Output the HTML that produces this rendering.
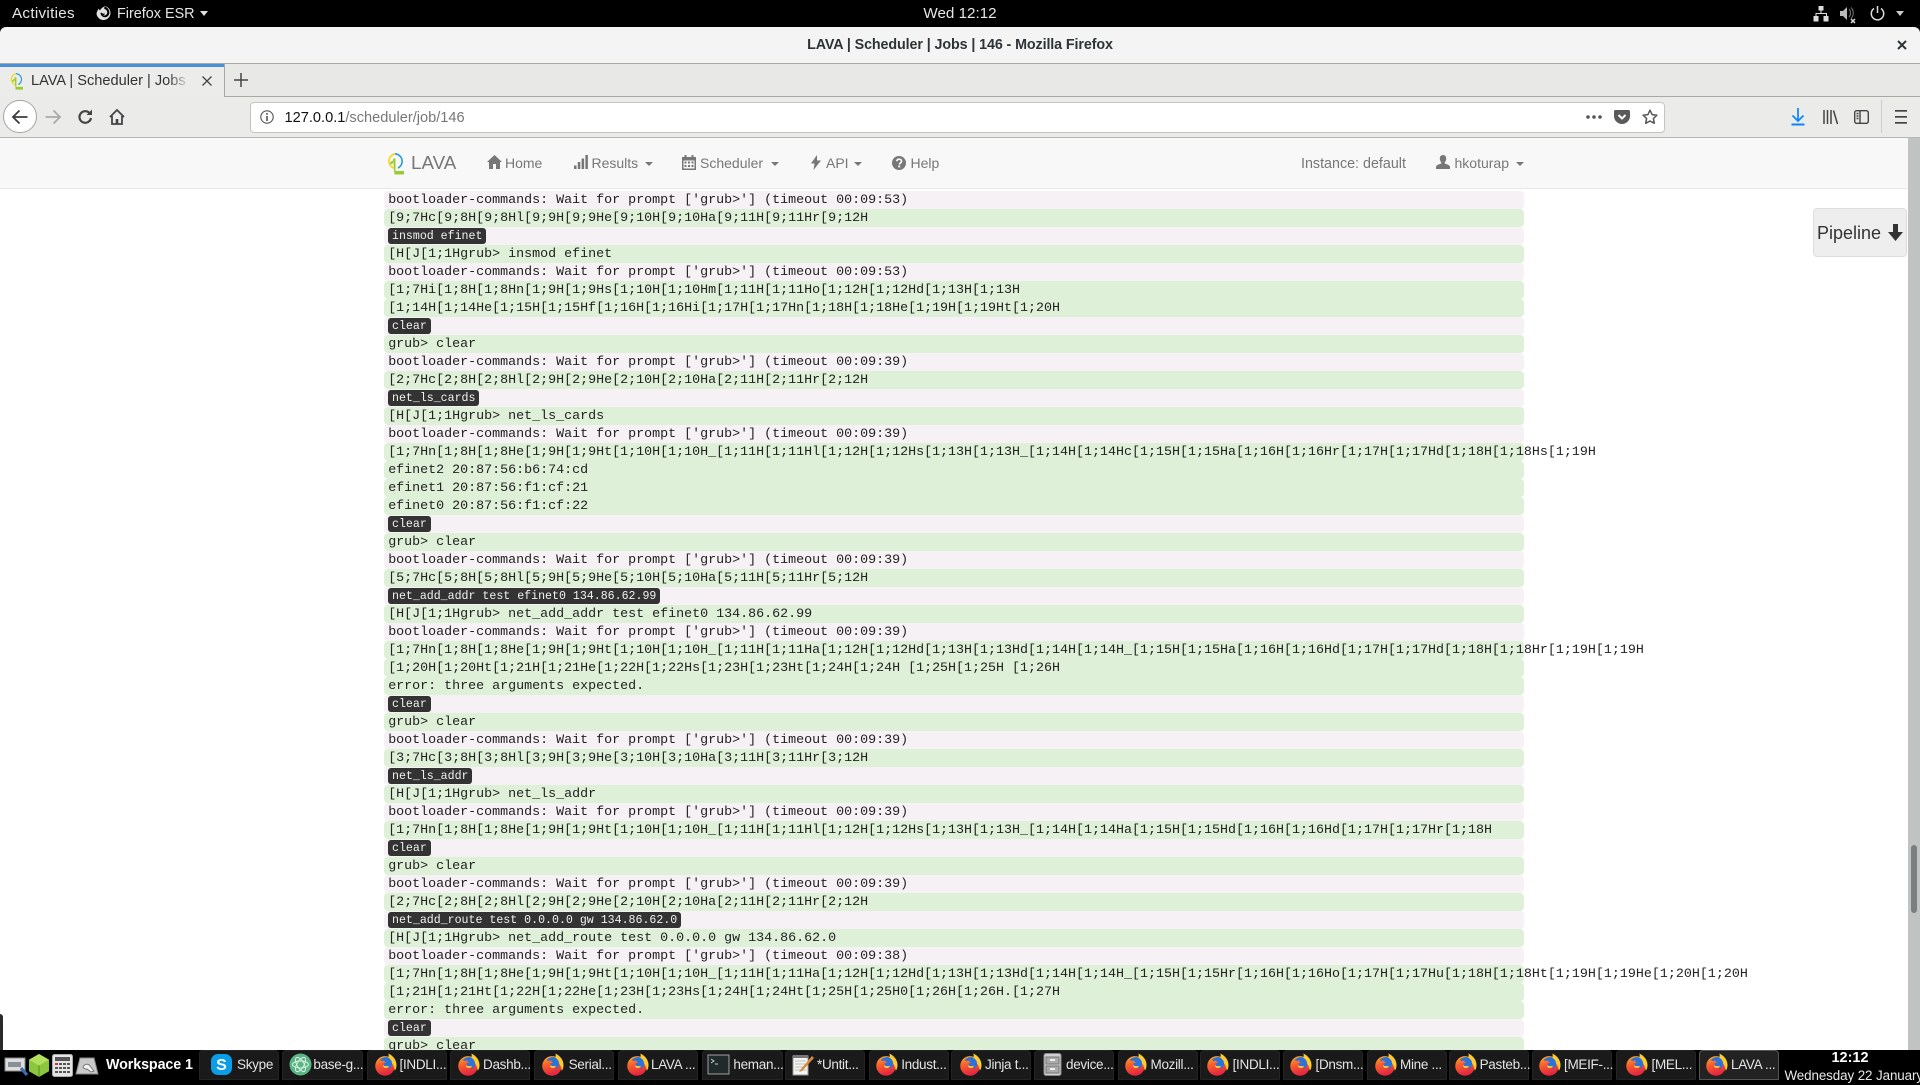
<!DOCTYPE html>
<html><head><meta charset="utf-8"><title>LAVA | Scheduler | Jobs | 146 - Mozilla Firefox</title>
<style>
html,body{margin:0;padding:0;background:#000;}
body{width:1920px;height:1080px;position:relative;overflow:hidden;font-family:"Liberation Sans",sans-serif;}
.a{position:absolute;white-space:pre;}
svg{position:absolute;overflow:visible;}
#log{position:absolute;left:0;top:138px;width:1920px;height:912px;overflow:hidden;background:#fff;}
.r{position:absolute;left:384px;width:1135.8px;height:18px;padding-left:4.2px;font:13.33px/20px "Liberation Mono",monospace;color:#222;white-space:pre;border-radius:4px;}
.g{background:#dff0d8;}
.p{background:#f6f1f4;}
.l{position:absolute;left:4.2px;top:1.4px;height:15.6px;line-height:17.4px;padding:0 3.8px;background:#333;color:#f2f2f2;font-size:11.6px;border-radius:3px;}
.nv{color:#777;font-size:14px;line-height:20px;}
.t{position:absolute;top:1050px;width:80.4px;height:30px;background:#1a1a1a;border-radius:4px 4px 0 0;box-shadow:inset 0 0 0 1px #242424;}
.t span{position:absolute;top:5px;color:#e4e4e4;font-size:13.5px;letter-spacing:-.3px;line-height:20px;white-space:pre;}
.t svg{top:3px;left:7px;width:23px;height:23px;}
.car{position:absolute;width:0;height:0;border-left:4px solid transparent;border-right:4px solid transparent;border-top:4px solid #777;}
</style></head><body>
<svg width="0" height="0" style="position:absolute">
<defs>
<linearGradient id="ffo" x1="0" y1="0" x2="0.3" y2="1"><stop offset="0" stop-color="#ffb52e"/><stop offset=".45" stop-color="#f9612b"/><stop offset="1" stop-color="#e5263f"/></linearGradient>
<symbol id="ff" viewBox="0 0 24 24">
<circle cx="11.5" cy="13.5" r="10.2" fill="url(#ffo)"/>
<path d="M15 .5c4.500 2 8.500 6.500 8.500 12 0 2.500-.7 4.500-1.800 6-.7-5.500-3-9-7.500-11.500 1-2 1.500-4.500.8-6.500z" fill="#ffcb2e"/>
<path d="M6 7.500c2-2.500 5.500-3.800 8-3 3.500 1.300 5.300 4.500 4.800 7.800-.4 2.700-2.200 4.500-4.800 5 1.700-1 2.200-2.300 1.300-3.600-1.500.7-3.300.5-4.600-.4-.9-.8-1.100-1.800-.5-2.600.9.200 1.800-.1 2.300-.9-1.300-.5-1.800-1.200-1.800-2.100-1.800.7-3.300.7-4.700-.2z" fill="#2a73d9"/>
<path d="M9.500 12.500c1.500 1.500 4 1.800 6 .8-.3 1.500-1.800 2.500-3.500 2.400-1.500-.1-2.500-1.500-2.500-3.200z" fill="#ffd84a"/>
</symbol>
<symbol id="logo" viewBox="0 0 18 22">
<path d="M9 15.500A7.500 7.500 0 0 1 9 .8" fill="none" stroke="#f7d51d" stroke-width="1.600"/>
<path d="M9 .8A7.500 7.500 0 0 1 12 15" fill="none" stroke="#2a9fd6" stroke-width="1.600"/>
<path d="M7 6h2.500v12.500H18V22H8.500z" fill="#9bcc2f" transform="translate(0 -.5)"/>
<path d="M7 7.500c-2 .5-3 2-3 3.500 1.500.5 3 0 3-1.500z" fill="#9bcc2f"/>
</symbol>
</defs></svg>

<!-- GNOME top bar -->
<div class="a" style="left:12px;top:5px;color:#e6e6e6;font-size:15.200px;letter-spacing:.3px;line-height:18px;">Activities</div>
<svg style="left:96px;top:5px" width="15" height="16" viewBox="0 0 15 16"><path d="M7.500 1a7 7 0 1 1-7 7.500C1 6 2 4.500 3 3.500c0 1 .5 1.500 1 2C5 3.500 6.500 2 9 1.500 8 2.500 8 3.500 8.500 4c2 .5 3 2 2.700 4-.4 2-2.700 3-4.500 2.300C8 10.200 9 9.500 8.800 8.500 7.500 9 6 8.500 5.500 7.500L4.500 8c.2 3 3 5 6 4 2.500-1 3.500-4 2.500-6.500C12 3 10 1.500 7.500 1z" fill="#e0e0e0"/></svg>
<div class="a" style="left:117px;top:5px;color:#e6e6e6;font-size:14.400px;line-height:18px;">Firefox ESR</div>
<div class="car" style="left:200px;top:11px;border-left-width:4.500px;border-right-width:4.500px;border-top:5px solid #e0e0e0"></div>
<div class="a" style="left:860px;width:200px;text-align:center;top:5px;color:#e6e6e6;font-size:15.200px;line-height:18px;">Wed 12:12</div>
<svg style="left:1813px;top:6px" width="16" height="16" viewBox="0 0 16 16" fill="#ddd"><rect x="5.500" y="0" width="5" height="4.500"/><rect x="0.500" y="10" width="5" height="5.500"/><rect x="10.500" y="10" width="5" height="5.500"/><path d="M7.500 4.500h1V7h5.500v3h-1V8H3.500v2h-1V7H7.500z"/></svg>
<svg style="left:1840px;top:6px" width="18" height="18" viewBox="0 0 18 18"><path d="M0 5h3l4-4v13L3 10H0z" fill="#bbb"/><path d="M9 3c2 2 2 6 0 8M11 1.500c3 3 3 8 0 11" stroke="#777" fill="none"/><path d="M11 13l4 4m0-4l-4 4" stroke="#ddd" stroke-width="1.500"/></svg>
<svg style="left:1870px;top:6px" width="15" height="16" viewBox="0 0 15 16" fill="none" stroke="#ddd" stroke-width="1.500"><path d="M7.500 0v7"/><path d="M4 2.500a6.200 6.200 0 1 0 7 0"/></svg>
<div class="car" style="left:1896px;top:11px;border-left-width:4.500px;border-right-width:4.500px;border-top:5px solid #ccc"></div>

<!-- Title bar -->
<div class="a" style="left:0;top:27px;width:1920px;height:36px;background:#f4f4f4;border-radius:6px 6px 0 0;border-bottom:1px solid #a9a9a4;"></div>
<div class="a" style="left:660px;width:600px;text-align:center;top:36px;color:#2e3436;font-size:14.300px;line-height:19px;font-weight:bold;letter-spacing:-.1px;">LAVA | Scheduler | Jobs | 146 - Mozilla Firefox</div>
<svg style="left:1897px;top:40px" width="10" height="10" viewBox="0 0 10 10"><path d="M1 1l8 8M9 1l-8 8" stroke="#2e3436" stroke-width="2"/></svg>

<!-- Tab bar -->
<div class="a" style="left:0;top:64px;width:1920px;height:32px;background:#e8e8e6;border-bottom:1px solid #a9a9a4;"></div>
<div class="a" style="left:0;top:64px;width:224px;height:33px;background:#ececeb;border-right:1px solid #a9a9a4;box-sizing:content-box;"></div>
<div class="a" style="left:0;top:64px;width:224px;height:3px;background:#4a90d9;"></div>
<svg style="left:9px;top:73px" width="14" height="17"><use href="#logo" width="14" height="17"/></svg>
<div class="a" style="left:31px;top:72px;width:157px;overflow:hidden;color:#333;font-size:14.600px;line-height:19px;">LAVA | Scheduler | Jobs | 146</div>
<div class="a" style="left:168px;top:71px;width:22px;height:21px;background:linear-gradient(90deg,rgba(236,236,235,0),#ececeb);"></div>
<svg style="left:202px;top:76px" width="10" height="10" viewBox="0 0 10 10"><path d="M.5.5l9 9M9.500.5l-9 9" stroke="#444" stroke-width="1.300"/></svg>
<svg style="left:234px;top:73px" width="14" height="14" viewBox="0 0 14 14"><path d="M7 0v14M0 7h14" stroke="#444" stroke-width="1.500"/></svg>

<!-- Toolbar -->
<div class="a" style="left:0;top:97px;width:1920px;height:40px;background:#ebebea;border-bottom:1px solid #b5b5b1;"></div>
<div class="a" style="left:3.300px;top:100px;width:31.400px;height:31.400px;border:1px solid #a5a5a5;border-radius:50%;background:#fff;"></div>
<svg style="left:12px;top:109px" width="16" height="16" viewBox="0 0 16 16" fill="none" stroke="#3c3c3c" stroke-width="1.800"><path d="M15.500 8H1M7.500 1.500L1 8l6.500 6.500"/></svg>
<svg style="left:45px;top:109px" width="16" height="16" viewBox="0 0 16 16" fill="none" stroke="#aaa" stroke-width="1.800"><path d="M.5 8H15M8.500 1.500L15 8l-6.500 6.500"/></svg>
<svg style="left:78px;top:109px" width="15" height="15" viewBox="0 0 15 15" fill="none" stroke="#444" stroke-width="2.200"><path d="M13 9a5.800 5.800 0 1 1-1.500-5"/><path d="M14 .5v5.500H8.500" fill="#444" stroke="none"/></svg>
<svg style="left:109px;top:109px" width="16" height="16" viewBox="0 0 16 16" fill="none" stroke="#444" stroke-width="1.800"><path d="M1 8l7-7 7 7M3 7v8h10V7"/><rect x="6.700" y="10" width="2.600" height="5" fill="#444" stroke="none"/></svg>

<div class="a" style="left:250px;top:102px;width:1413px;height:29px;background:#fff;border:1px solid #c4c4c2;border-radius:4px;"></div>
<svg style="left:260px;top:110px" width="14" height="14" viewBox="0 0 14 14"><circle cx="7" cy="7" r="6.200" fill="none" stroke="#555" stroke-width="1.100"/><rect x="6.200" y="6" width="1.600" height="5" fill="#555"/><rect x="6.200" y="3" width="1.600" height="1.700" fill="#555"/></svg>
<div class="a" style="left:284.500px;top:108px;font-size:14.600px;line-height:20px;color:#111;">127.0.0.1<span style="color:#777">/scheduler/job/146</span></div>
<svg style="left:1586px;top:114px" width="16" height="6" viewBox="0 0 16 6" fill="#555"><circle cx="2" cy="3" r="1.800"/><circle cx="8" cy="3" r="1.800"/><circle cx="14" cy="3" r="1.800"/></svg>
<svg style="left:1614px;top:110px" width="16" height="14" viewBox="0 0 16 14"><path d="M1.500 0h13A1.500 1.500 0 0 1 16 1.500V6a8 8 0 0 1-16 0V1.500A1.500 1.500 0 0 1 1.500 0z" fill="#5a5a5a"/><path d="M4.500 5L8 8.500 11.500 5" stroke="#fff" stroke-width="2" fill="none"/></svg>
<svg style="left:1642px;top:109px" width="16" height="16" viewBox="0 0 16 16"><path d="M8 1.200l2.100 4.400 4.800.6-3.500 3.300.9 4.800L8 12l-4.300 2.300.9-4.800L1.100 6.200l4.800-.6z" fill="none" stroke="#555" stroke-width="1.500" stroke-linejoin="round"/></svg>
<svg style="left:1791px;top:108px" width="14" height="18" viewBox="0 0 14 18" fill="none" stroke="#0a84ff" stroke-width="1.700"><path d="M7 0v12.500M1.500 7.500L7 13l5.500-5.500"/><path d="M.5 16.500h13" stroke-width="2"/></svg>
<svg style="left:1823px;top:110px" width="15" height="14" viewBox="0 0 15 14" fill="none" stroke="#444" stroke-width="1.500"><path d="M1 0v14M4.500 0v14M8 0v14M10.500 .5L14.500 14"/></svg>
<svg style="left:1854px;top:110px" width="15" height="14" viewBox="0 0 15 14" fill="none" stroke="#444" stroke-width="1.400"><rect x=".7" y=".7" width="13.600" height="12.600" rx="2"/><path d="M6 .7v12.600M2.500 3.500h2M2.500 6h2M2.500 8.500h2"/></svg>
<div class="a" style="left:1881px;top:100px;width:1px;height:33px;background:#ccc;"></div>
<svg style="left:1895px;top:110px" width="12" height="14" viewBox="0 0 12 14" fill="#444"><rect width="12" height="1.700" y="0"/><rect width="12" height="1.700" y="6"/><rect width="12" height="1.700" y="12"/></svg>

<!-- Page log -->
<div id="log">
<div class="r g" style="top:-17px"></div>
<div class="r p" style="top:53px">bootloader-commands: Wait for prompt ['grub&gt;'] (timeout 00:09:53)</div>
<div class="r g" style="top:71px">[9;7Hc[9;8H[9;8Hl[9;9H[9;9He[9;10H[9;10Ha[9;11H[9;11Hr[9;12H</div>
<div class="r p" style="top:89px"><span class="l">insmod efinet</span></div>
<div class="r g" style="top:107px">[H[J[1;1Hgrub&gt; insmod efinet</div>
<div class="r p" style="top:125px">bootloader-commands: Wait for prompt ['grub&gt;'] (timeout 00:09:53)</div>
<div class="r g" style="top:143px">[1;7Hi[1;8H[1;8Hn[1;9H[1;9Hs[1;10H[1;10Hm[1;11H[1;11Ho[1;12H[1;12Hd[1;13H[1;13H</div>
<div class="r g" style="top:161px">[1;14H[1;14He[1;15H[1;15Hf[1;16H[1;16Hi[1;17H[1;17Hn[1;18H[1;18He[1;19H[1;19Ht[1;20H</div>
<div class="r p" style="top:179px"><span class="l">clear</span></div>
<div class="r g" style="top:197px">grub&gt; clear</div>
<div class="r p" style="top:215px">bootloader-commands: Wait for prompt ['grub&gt;'] (timeout 00:09:39)</div>
<div class="r g" style="top:233px">[2;7Hc[2;8H[2;8Hl[2;9H[2;9He[2;10H[2;10Ha[2;11H[2;11Hr[2;12H</div>
<div class="r p" style="top:251px"><span class="l">net_ls_cards</span></div>
<div class="r g" style="top:269px">[H[J[1;1Hgrub&gt; net_ls_cards</div>
<div class="r p" style="top:287px">bootloader-commands: Wait for prompt ['grub&gt;'] (timeout 00:09:39)</div>
<div class="r g" style="top:305px">[1;7Hn[1;8H[1;8He[1;9H[1;9Ht[1;10H[1;10H_[1;11H[1;11Hl[1;12H[1;12Hs[1;13H[1;13H_[1;14H[1;14Hc[1;15H[1;15Ha[1;16H[1;16Hr[1;17H[1;17Hd[1;18H[1;18Hs[1;19H</div>
<div class="r g" style="top:323px">efinet2 20:87:56:b6:74:cd</div>
<div class="r g" style="top:341px">efinet1 20:87:56:f1:cf:21</div>
<div class="r g" style="top:359px">efinet0 20:87:56:f1:cf:22</div>
<div class="r p" style="top:377px"><span class="l">clear</span></div>
<div class="r g" style="top:395px">grub&gt; clear</div>
<div class="r p" style="top:413px">bootloader-commands: Wait for prompt ['grub&gt;'] (timeout 00:09:39)</div>
<div class="r g" style="top:431px">[5;7Hc[5;8H[5;8Hl[5;9H[5;9He[5;10H[5;10Ha[5;11H[5;11Hr[5;12H</div>
<div class="r p" style="top:449px"><span class="l">net_add_addr test efinet0 134.86.62.99</span></div>
<div class="r g" style="top:467px">[H[J[1;1Hgrub&gt; net_add_addr test efinet0 134.86.62.99</div>
<div class="r p" style="top:485px">bootloader-commands: Wait for prompt ['grub&gt;'] (timeout 00:09:39)</div>
<div class="r g" style="top:503px">[1;7Hn[1;8H[1;8He[1;9H[1;9Ht[1;10H[1;10H_[1;11H[1;11Ha[1;12H[1;12Hd[1;13H[1;13Hd[1;14H[1;14H_[1;15H[1;15Ha[1;16H[1;16Hd[1;17H[1;17Hd[1;18H[1;18Hr[1;19H[1;19H</div>
<div class="r g" style="top:521px">[1;20H[1;20Ht[1;21H[1;21He[1;22H[1;22Hs[1;23H[1;23Ht[1;24H[1;24H [1;25H[1;25H [1;26H</div>
<div class="r g" style="top:539px">error: three arguments expected.</div>
<div class="r p" style="top:557px"><span class="l">clear</span></div>
<div class="r g" style="top:575px">grub&gt; clear</div>
<div class="r p" style="top:593px">bootloader-commands: Wait for prompt ['grub&gt;'] (timeout 00:09:39)</div>
<div class="r g" style="top:611px">[3;7Hc[3;8H[3;8Hl[3;9H[3;9He[3;10H[3;10Ha[3;11H[3;11Hr[3;12H</div>
<div class="r p" style="top:629px"><span class="l">net_ls_addr</span></div>
<div class="r g" style="top:647px">[H[J[1;1Hgrub&gt; net_ls_addr</div>
<div class="r p" style="top:665px">bootloader-commands: Wait for prompt ['grub&gt;'] (timeout 00:09:39)</div>
<div class="r g" style="top:683px">[1;7Hn[1;8H[1;8He[1;9H[1;9Ht[1;10H[1;10H_[1;11H[1;11Hl[1;12H[1;12Hs[1;13H[1;13H_[1;14H[1;14Ha[1;15H[1;15Hd[1;16H[1;16Hd[1;17H[1;17Hr[1;18H</div>
<div class="r p" style="top:701px"><span class="l">clear</span></div>
<div class="r g" style="top:719px">grub&gt; clear</div>
<div class="r p" style="top:737px">bootloader-commands: Wait for prompt ['grub&gt;'] (timeout 00:09:39)</div>
<div class="r g" style="top:755px">[2;7Hc[2;8H[2;8Hl[2;9H[2;9He[2;10H[2;10Ha[2;11H[2;11Hr[2;12H</div>
<div class="r p" style="top:773px"><span class="l">net_add_route test 0.0.0.0 gw 134.86.62.0</span></div>
<div class="r g" style="top:791px">[H[J[1;1Hgrub&gt; net_add_route test 0.0.0.0 gw 134.86.62.0</div>
<div class="r p" style="top:809px">bootloader-commands: Wait for prompt ['grub&gt;'] (timeout 00:09:38)</div>
<div class="r g" style="top:827px">[1;7Hn[1;8H[1;8He[1;9H[1;9Ht[1;10H[1;10H_[1;11H[1;11Ha[1;12H[1;12Hd[1;13H[1;13Hd[1;14H[1;14H_[1;15H[1;15Hr[1;16H[1;16Ho[1;17H[1;17Hu[1;18H[1;18Ht[1;19H[1;19He[1;20H[1;20H</div>
<div class="r g" style="top:845px">[1;21H[1;21Ht[1;22H[1;22He[1;23H[1;23Hs[1;24H[1;24Ht[1;25H[1;25H0[1;26H[1;26H.[1;27H</div>
<div class="r g" style="top:863px">error: three arguments expected.</div>
<div class="r p" style="top:881px"><span class="l">clear</span></div>
<div class="r g" style="top:899px">grub&gt; clear</div>
<div class="a" style="left:0;top:876px;width:3px;height:36px;background:#2a2a2a;border-radius:0 4px 0 0;"></div>
</div>

<!-- Navbar -->
<div class="a" style="left:0;top:138px;width:1908px;height:50px;background:#f8f8f8;border-bottom:1px solid #e7e7e7;"></div>
<svg style="left:386px;top:153px" width="18" height="22"><use href="#logo" width="18" height="22"/></svg>
<div class="a" style="left:411px;top:152px;color:#777;font-size:18.800px;line-height:22px;">LAVA</div>
<svg style="left:487px;top:155px" width="15" height="14" viewBox="0 0 15 14" fill="#777"><path d="M7.500 0L15 7h-2v7H9V9H6v5H2V7H0z"/></svg>
<div class="a nv" style="left:505px;top:153px;">Home</div>
<svg style="left:574px;top:155px" width="14" height="14" viewBox="0 0 14 14" fill="#777"><rect x="0" y="10.500" width="2.500" height="3.500"/><rect x="3.800" y="7" width="2.500" height="7"/><rect x="7.600" y="3.500" width="2.500" height="10.500"/><rect x="11.400" y="0" width="2.500" height="14"/></svg>
<div class="a nv" style="left:591.500px;top:153px;">Results</div>
<div class="car" style="left:645px;top:162px"></div>
<svg style="left:682px;top:155px" width="14" height="15" viewBox="0 0 14 15" fill="#777"><path d="M0 2h2.500V0h2v2h5V0h2v2H14v13H0zM1.500 5.500v8h11v-8z"/><path d="M2.500 6.500h2v2h-2zm3.500 0h2v2H6zm3.500 0h2v2h-2zm-7 3.500h2v2h-2zm3.500 0h2v2H6zm3.500 0h2v2h-2z"/></svg>
<div class="a nv" style="left:700px;top:153px;">Scheduler</div>
<div class="car" style="left:770.500px;top:162px"></div>
<svg style="left:811px;top:155px" width="10" height="15" viewBox="0 0 10 15" fill="#777"><path d="M6 0L0 8.500h3.500L2.500 15 10 5.500H6z"/></svg>
<div class="a nv" style="left:826px;top:153px;">API</div>
<div class="car" style="left:853.500px;top:162px"></div>
<svg style="left:892px;top:156px" width="14" height="14" viewBox="0 0 14 14"><circle cx="7" cy="7" r="7" fill="#777"/><path d="M4.700 5.200C5 3.800 6 3.200 7.200 3.200c1.400 0 2.300.9 2.300 2 0 1.800-2 1.700-2 3.300" fill="none" stroke="#f8f8f8" stroke-width="1.700"/><rect x="6.200" y="9.500" width="2" height="1.900" fill="#f8f8f8"/></svg>
<div class="a nv" style="left:910.500px;top:153px;">Help</div>
<div class="a nv" style="left:1301px;top:154px;font-size:14.300px;">Instance: default</div>
<svg style="left:1436px;top:155px" width="14" height="14" viewBox="0 0 14 14" fill="#777"><path d="M7 0c2 0 3.200 1.600 3.200 3.500 0 1.500-.6 3-1.500 3.800v1.200c1.800.6 5.300 1.500 5.300 3.500v2H0v-2c0-2 3.500-2.900 5.300-3.500V7.300c-.9-.8-1.500-2.300-1.500-3.800C3.800 1.600 5 0 7 0z"/></svg>
<div class="a nv" style="left:1454.500px;top:153px;">hkoturap</div>
<div class="car" style="left:1516px;top:162px"></div>

<!-- Pipeline button -->
<div class="a" style="left:1813px;top:208px;width:94px;height:49px;box-sizing:border-box;background:#eee;border:1px solid #ddd;border-radius:4px;"></div>
<div class="a" style="left:1817px;top:222px;font-size:18px;line-height:22px;color:#333;">Pipeline</div>
<svg style="left:1888px;top:224px" width="15" height="17" viewBox="0 0 15 17" fill="#333"><path d="M5 0h5v8h5l-7.500 9L0 8h5z"/></svg>

<!-- Scrollbar -->
<div class="a" style="left:1908px;top:138px;width:12px;height:912px;background:#c1c3c3;"></div>
<div class="a" style="left:1911px;top:845px;width:6px;height:68px;background:#7a7f7f;border-radius:3px;"></div>

<!-- Taskbar -->
<div class="a" style="left:0;top:1050px;width:1920px;height:30px;background:#000;"></div>
<svg style="left:4px;top:1055px" width="24" height="22" viewBox="0 0 24 22"><rect x="1" y="3" width="20" height="13" fill="#ddd" stroke="#888"/><rect x="4" y="7" width="13" height="5" fill="#8a8f95"/><path d="M17 13l6 7" stroke="#3a6fb0" stroke-width="3"/></svg>
<svg style="left:29px;top:1054px" width="20" height="23" viewBox="0 0 20 23"><path d="M10 0l10 5.700v11.600L10 23 0 17.300V5.700z" fill="#8cc63f"/><path d="M10 0l10 5.700L10 11.500 0 5.700z" fill="#b2e05c"/><path d="M10 11.500V23" stroke="#5a8a1f"/></svg>
<svg style="left:52px;top:1054px" width="21" height="23" viewBox="0 0 21 23"><rect x=".5" y=".5" width="20" height="22" rx="2" fill="#e4e4e4" stroke="#aaa"/><rect x="3" y="3" width="15" height="4" fill="#555"/><g fill="#555"><rect x="3" y="9" width="3" height="2" fill="#c33"/><rect x="7" y="9" width="3" height="2"/><rect x="11" y="9" width="3" height="2"/><rect x="15" y="9" width="3" height="2"/><rect x="3" y="13" width="3" height="2"/><rect x="7" y="13" width="3" height="2"/><rect x="11" y="13" width="3" height="2"/><rect x="15" y="13" width="3" height="2"/><rect x="3" y="17" width="3" height="2"/><rect x="7" y="17" width="3" height="2"/><rect x="11" y="17" width="3" height="2"/><rect x="15" y="17" width="3" height="2"/></g></svg>
<svg style="left:76px;top:1057px" width="22" height="18" viewBox="0 0 22 18"><path d="M4 1h14l4 16H0z" fill="#c9c9c9" stroke="#888"/><path d="M7 10c2-4 6-3 7-1l4 5-3 1-4-3c-1 .5-3 0-4-2z" fill="#f4f4f4" stroke="#777"/></svg>
<div class="a" style="left:106px;top:1055px;color:#fff;font-size:14.300px;line-height:20px;font-weight:bold;letter-spacing:-.1px;">Workspace 1</div>

<div class="t" style="left:199px"><svg style="left:12px;top:3px;width:21px;height:23px" viewBox="0 0 21 23"><rect x="0" y="1" width="21" height="21" rx="7" fill="#0a9ee8"/><text x="10.500" y="17" text-anchor="middle" font-size="16" font-weight="bold" fill="#fff" font-family="Liberation Sans">S</text></svg><span style="left:38px">Skype</span></div>
<div class="t" style="left:282.400px"><svg viewBox="0 0 23 23"><circle cx="11.500" cy="11.500" r="11" fill="#5bb585"/><g fill="none" stroke="#d8f0e0"><ellipse cx="11.500" cy="11.500" rx="8" ry="3.500"/><ellipse cx="11.500" cy="11.500" rx="8" ry="3.500" transform="rotate(60 11.500 11.500)"/><ellipse cx="11.500" cy="11.500" rx="8" ry="3.500" transform="rotate(120 11.500 11.500)"/></g></svg><span style="left:31px">base-g...</span></div>
<div class="t" style="left:366.500px"><svg><use href="#ff" width="23" height="23"/></svg><span style="left:33px">[INDLI...</span></div>
<div class="t" style="left:450px"><svg><use href="#ff" width="23" height="23"/></svg><span style="left:33px">Dashb...</span></div>
<div class="t" style="left:534px"><svg><use href="#ff" width="23" height="23"/></svg><span style="left:34.600px">Serial...</span></div>
<div class="t" style="left:618px"><svg style="left:8px"><use href="#ff" width="23" height="23"/></svg><span style="left:33px">LAVA ...</span></div>
<div class="t" style="left:702.400px"><svg style="left:5px" viewBox="0 0 23 23"><rect x="1" y="2" width="21" height="19" fill="#333" stroke="#999"/><rect x="2" y="3" width="19" height="17" fill="#1f2a2a"/><path d="M4 6l3 2-3 2M8 11h3" stroke="#ccc" fill="none"/></svg><span style="left:31px">heman...</span></div>
<div class="t" style="left:785px"><svg style="left:6px" viewBox="0 0 23 23"><path d="M2 3h15v19H2z" fill="#f4f4f0" stroke="#999"/><path d="M4 8h11M4 11h11M4 14h11M4 17h11" stroke="#bbb"/><path d="M2 2h15v3H2z" fill="#777"/><path d="M21 3L10 16l-2 3 3-1L23 5z" fill="#d88a3a"/></svg><span style="left:32px">*Untit...</span></div>
<div class="t" style="left:868.600px"><svg style="left:6.500px"><use href="#ff" width="23" height="23"/></svg><span style="left:32.600px">Indust...</span></div>
<div class="t" style="left:951px"><svg style="left:8px"><use href="#ff" width="23" height="23"/></svg><span style="left:34px">Jinja t...</span></div>
<div class="t" style="left:1034px"><svg style="left:7px" viewBox="0 0 23 23"><rect x="3" y="0.500" width="17" height="22" rx="2" fill="#cfcfcf" stroke="#888"/><rect x="5" y="4" width="13" height="7" fill="#aaa" stroke="#777"/><rect x="5" y="13" width="13" height="7" fill="#aaa" stroke="#777"/><rect x="9" y="6" width="5" height="2" fill="#eee"/><rect x="9" y="15" width="5" height="2" fill="#eee"/></svg><span style="left:32px">device...</span></div>
<div class="t" style="left:1117.500px"><svg style="left:6.600px"><use href="#ff" width="23" height="23"/></svg><span style="left:33px">Mozill...</span></div>
<div class="t" style="left:1200px"><svg style="left:6px"><use href="#ff" width="23" height="23"/></svg><span style="left:32.600px">[INDLI...</span></div>
<div class="t" style="left:1283px"><svg style="left:6px"><use href="#ff" width="23" height="23"/></svg><span style="left:32.500px">[Dnsm...</span></div>
<div class="t" style="left:1366.500px"><svg style="left:7.400px"><use href="#ff" width="23" height="23"/></svg><span style="left:33.500px">Mine ...</span></div>
<div class="t" style="left:1449px"><svg style="left:5px"><use href="#ff" width="23" height="23"/></svg><span style="left:30.600px">Pasteb...</span></div>
<div class="t" style="left:1532px"><svg style="left:6px"><use href="#ff" width="23" height="23"/></svg><span style="left:32px">[MEIF-...</span></div>
<div class="t" style="left:1615.500px"><svg style="left:9.500px"><use href="#ff" width="23" height="23"/></svg><span style="left:36px">[MEL...</span></div>
<div class="t" style="left:1699px;box-shadow:inset 0 0 0 1px #555;background:#222"><svg style="left:6px"><use href="#ff" width="23" height="23"/></svg><span style="left:32px">LAVA ...</span></div>

<div class="a" style="left:1780px;width:140px;text-align:center;top:1049px;color:#fff;font-size:14.500px;line-height:18px;font-weight:bold;">12:12</div>
<div class="a" style="left:1784.500px;top:1067px;color:#e8e8e8;font-size:13.400px;letter-spacing:-.1px;line-height:18px;">Wednesday 22 January</div>
</body></html>
